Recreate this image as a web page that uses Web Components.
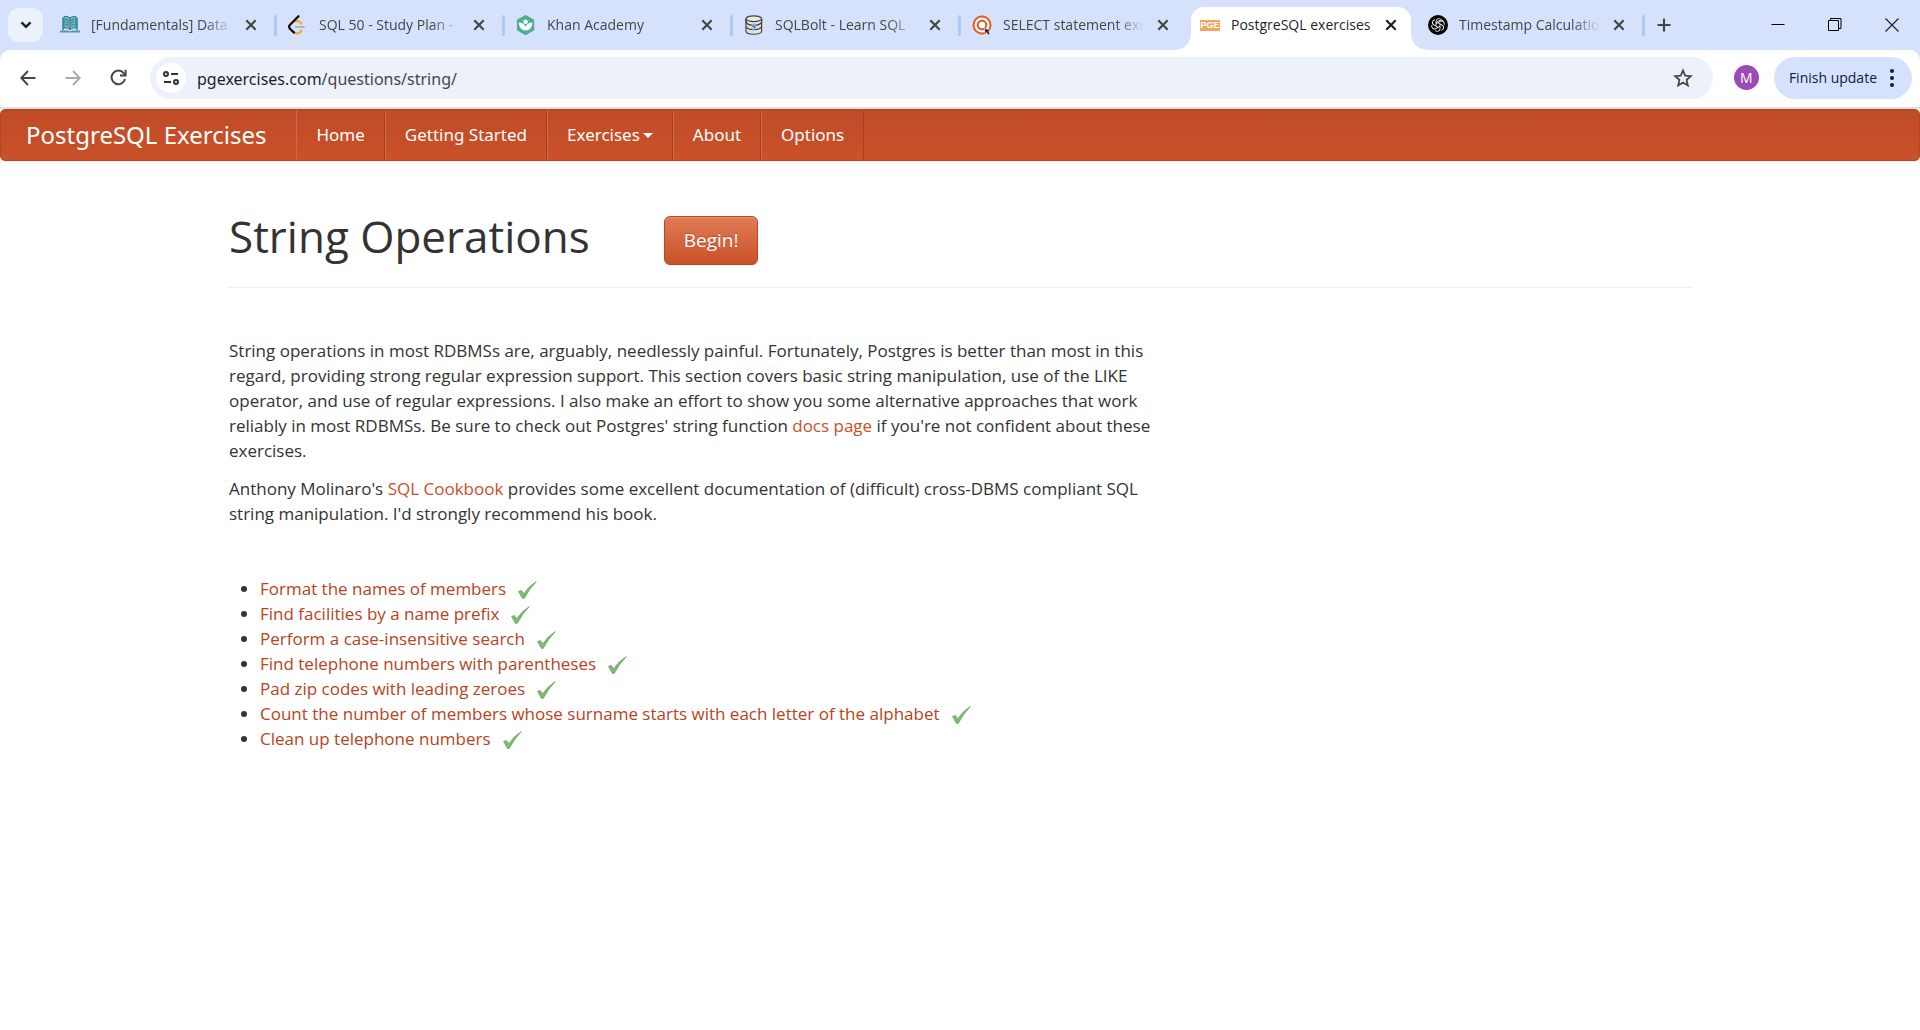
<!DOCTYPE html>
<html lang="en">
<head>
<meta charset="utf-8">
<title>PostgreSQL exercises</title>
<style>
  html, body { margin: 0; background: #fff; }
  body { font-family: "Open Sans", "Noto Sans", sans-serif; color: #333; min-height: 100vh; }
</style>
</head>
<body>
<browser-chrome>
  <tab-strip slot="tabs">
    <browser-tab label="[Fundamentals] Data"><svg slot="icon" viewBox="0 0 20 20"><path fill="#4d98ad" d="M2 3l2-1v13H2zM16 2l2 1v12h-2z"/><path fill="#70b4c4" d="M4 1.5c2.500-.5 4.500 0 6 1.500 1.500-1.500 3.500-2 6-1.500V13c-2.500-.3-4.500.2-6 1.700-1.500-1.500-3.500-2-6-1.700z"/><path fill="none" stroke="#33798e" stroke-width="1" d="M4 1.500c2.500-.5 4.500 0 6 1.500 1.500-1.500 3.500-2 6-1.500V13c-2.500-.3-4.500.2-6 1.700-1.500-1.500-3.500-2-6-1.700zM10 3v12M5.500 4.500q2 0 3.500 1M5.500 7q2 0 3.500 1M5.500 9.500q2 0 3.500 1M14.500 4.500q-2 0-3.500 1M14.500 7q-2 0-3.500 1M14.500 9.500q-2 0-3.500 1"/><path fill="#4d98ad" d="M0 15.500h8l2 1 2-1h8v2H0z"/></svg></browser-tab>
    <browser-tab label="SQL 50 - Study Plan -"><svg slot="icon" viewBox="0 0 20 20"><g fill="none" stroke-linecap="round" stroke-width="2.200"><path stroke="#f4a83c" d="M8 6.500q1.500-1.200 3 0l2.500 2.300M7 17.500q2.500 2 4.500.2l2-2"/><path stroke="#b5b5b5" stroke-width="1.800" d="M7.500 12h8.500"/><path stroke="#0a0a0a" d="M10.500 1.200L2 9.800q-1.800 1.900 0 3.900L6 17.600"/></g></svg></browser-tab>
    <browser-tab label="Khan Academy"><svg slot="icon" viewBox="0 0 20 20"><path fill="#4cb08f" d="M9 .3L.9 4.800v10.400L9 19.900q.6.200 1.200 0l8-4.700V4.800L10.200.3Q9.600 0 9 .3z"/><circle cx="9.600" cy="6.800" r="2.300" fill="#fff"/><path fill="#fff" d="M2.800 7.500c3.800 0 6 2 6.800 4.500.8-2.500 3-4.500 6.800-4.500 0 4.500-2.800 8-6.800 8s-6.800-3.500-6.800-8z"/></svg></browser-tab>
    <browser-tab label="SQLBolt - Learn SQL"><svg slot="icon" viewBox="0 0 20 20"><path fill="#e4e3dc" stroke="#444" stroke-width="1.200" d="M2 3.500v12.800C2 20.200 17.600 20.200 17.600 16.300V3.500"/><ellipse cx="9.800" cy="3.700" rx="7.800" ry="2.900" fill="#e9e8e2" stroke="#444" stroke-width="1.200"/><path fill="none" stroke="#444" stroke-width="1.200" d="M2 7.500q2.500 3 7.800 2.700 5.300.3 7.800-2.700M2 11.800q2.500 3 7.800 2.700 5.300.3 7.800-2.700M2 4v4M17.600 4v4"/><path fill="#2f6fd6" stroke="#dfe9fa" stroke-width=".6" d="M11 7l-4 5.200h2.500L8.500 17l4.300-6h-2.500z"/></svg></browser-tab>
    <browser-tab label="SELECT statement exe"><svg slot="icon" viewBox="0 0 20 20"><circle cx="10" cy="10" r="10" fill="#fff"/><circle cx="10" cy="10" r="8.600" fill="none" stroke="#dc6133" stroke-width="2.200"/><circle cx="10" cy="10" r="4.300" fill="none" stroke="#dc6133" stroke-width="2.200"/><path fill="#222" stroke="#fff" stroke-width=".5" d="M12.500 13.500l6 1.500-2 1.200 1.500 2.800-2 .8-1.500-2.500-1.500 1.200z"/></svg></browser-tab>
    <browser-tab label="PostgreSQL exercises" active><pge-badge slot="icon"></pge-badge></browser-tab>
    <browser-tab label="Timestamp Calculatio"><svg slot="icon" viewBox="0 0 20 20"><circle cx="10" cy="10" r="10"/><g fill="none" stroke="#fff" stroke-width=".9" stroke-linejoin="round"><path d="M8 10.900V6.400q0-2.600 2.500-2.800 1.500 0 2.400 1M8 7.500l3.900-2.200q2.200-1 3.600.9"/><path d="M8 10.900V6.400q0-2.600 2.500-2.800 1.500 0 2.400 1" transform="rotate(60 10 10)"/><path d="M8 10.900V6.400q0-2.600 2.500-2.800 1.500 0 2.400 1" transform="rotate(120 10 10)"/><path d="M8 10.900V6.400q0-2.600 2.500-2.800 1.500 0 2.400 1" transform="rotate(180 10 10)"/><path d="M8 10.900V6.400q0-2.600 2.500-2.800 1.500 0 2.400 1" transform="rotate(240 10 10)"/><path d="M8 10.900V6.400q0-2.600 2.500-2.800 1.500 0 2.400 1" transform="rotate(300 10 10)"/></g></svg></browser-tab>
  </tab-strip>
  <address-bar host-name="pgexercises.com" path="/questions/string/"></address-bar>
</browser-chrome>

<site-nav brand="PostgreSQL Exercises">
  <nav-item>Home</nav-item>
  <nav-item>Getting Started</nav-item>
  <nav-item dropdown>Exercises</nav-item>
  <nav-item>About</nav-item>
  <nav-item>Options</nav-item>
</site-nav>

<exercise-page heading="String Operations">
  <intro-text slot="intro"></intro-text>
  <exercise-list slot="exercises"></exercise-list>
</exercise-page>

<script>
class Base extends HTMLElement {
  connectedCallback() {
    if (this.shadowRoot) return;
    this.attachShadow({ mode: 'open' }).innerHTML = this.view();
  }
}

customElements.define('browser-chrome', class extends Base {
  view() {
    return `<style>
      :host { display: block; background: #d6e1fb; border-bottom: 2px solid #dfe3e5; }
      .bar { background: #fff; border-radius: 10px 10px 0 0; }
    </style>
    <slot name="tabs"></slot><div class="bar"><slot></slot></div>`;
  }
});

customElements.define('tab-strip', class extends Base {
  view() {
    return `<style>
      :host { display: flex; height: 50px; align-items: stretch; }
      button { border: 0; background: none; padding: 0; display: grid; place-items: center; }
      .search { width: 35px; height: 34px; border-radius: 11px; background: #ecf2fc; margin: 8px 6px 8px 8px; flex: none; }
      .tabs { display: flex; flex: 0 1 1596px; min-width: 0; }
      .add { width: 38px; flex: none; }
      .win { margin-left: auto; display: flex; }
      .win button { width: 57px; }
      svg { display: block; }
    </style>
    <button class="search" aria-label="Search tabs"><svg width="12" height="8" fill="none" stroke="#1f1f1f" stroke-width="2.400"><path d="M1.500 1.300L6 5.800l4.500-4.500"/></svg></button>
    <div class="tabs"><slot></slot></div>
    <button class="add" aria-label="New tab"><svg width="14" height="14" stroke="#444746" stroke-width="2.200"><path d="M7 .5v13M.5 7h13"/></svg></button>
    <div class="win">
      <button aria-label="Minimize"><svg width="14" height="14" stroke="#000"><path d="M.5 6.500h13"/></svg></button>
      <button aria-label="Restore"><svg width="14" height="14" fill="none" stroke="#000"><path d="M.5 2.500h10v10H.5zM2.500 2.500v-2h10.500v10h-2.500"/></svg></button>
      <button aria-label="Close"><svg width="14" height="14" stroke="#222" stroke-width="1.200"><path d="M.5.5l13 13M13.500.5l-13 13"/></svg></button>
    </div>`;
  }
});

customElements.define('browser-tab', class extends Base {
  view() {
    return `<style>
      :host { display: flex; align-items: center; flex: 1 1 0; min-width: 0; padding-left: 11px; box-sizing: border-box; color: #444746; position: relative; }
      ::slotted(*) { width: 20px; height: 20px; flex: none; display: block; margin-right: 11px; }
      .label { flex: 1; min-width: 0; overflow: hidden; white-space: nowrap; font: 14px/22px "Open Sans", sans-serif;
        -webkit-mask-image: linear-gradient(to right, #000 calc(100% - 28px), transparent); mask-image: linear-gradient(to right, #000 calc(100% - 28px), transparent); }
      button { border: 0; background: none; color: inherit; padding: 0; width: 12px; height: 20px; display: grid; place-items: center; margin: 0 17px 0 13px; }
      .sep { width: 3px; height: 21px; border-radius: 2px; background: #aec8f8; }
      .shape { display: none; }
      :host([active]) { color: #1f1f1f; z-index: 1; }
      :host([active]) .label { -webkit-mask-image: none; mask-image: none; }
      :host([active]) .shape { display: block; position: absolute; z-index: -1; inset: 7px 6px 0 2px; background: #fff; border-radius: 13px 13px 0 0; }
      .shape::before, .shape::after { content: ""; position: absolute; bottom: 0; width: 15px; height: 15px; }
      .shape::before { right: 100%; background: radial-gradient(circle at 0 0, transparent 14px, #fff 15px); }
      .shape::after { left: 100%; background: radial-gradient(circle at 100% 0, transparent 14px, #fff 15px); }
      :host([active]) .sep, :host([quiet]) .sep { visibility: hidden; }
    </style>
    <div class="shape"></div><slot name="icon"></slot><span class="label">${this.getAttribute('label')}</span>
    <button aria-label="Close tab"><svg width="12" height="12" stroke="currentColor" stroke-width="2.200"><path d="M1.300 1.300l9.400 9.400M10.700 1.300l-9.400 9.400"/></svg></button><div class="sep"></div>`;
  }
  connectedCallback() {
    const next = this.nextElementSibling;
    if (next && next.hasAttribute('active')) this.setAttribute('quiet', '');
    super.connectedCallback();
  }
});

customElements.define('pge-badge', class extends Base {
  view() {
    return `<style>:host { display: flex !important; align-items: center; }
      span { flex: 1; background: #f2a65e; color: #fff; font: bold 9px/11px "Liberation Sans", sans-serif; text-align: center; }</style><span>PGE</span>`;
  }
});

customElements.define('address-bar', class extends Base {
  view() {
    return `<style>
      :host { display: flex; align-items: center; padding: 7px 8px 9px 14px; height: 41px; color: #444746; }
      button { border: 0; background: none; padding: 0; color: inherit; display: grid; place-items: center; flex: none; }
      .tool { width: 28px; height: 28px; margin-right: 17px; }
      form { flex: 1; display: flex; align-items: center; height: 42px; border-radius: 21px; background: #edf1fa; padding: 0 20px 0 6px; box-sizing: border-box; margin-left: 1px; }
      .site { width: 30px; height: 30px; border-radius: 50%; background: #fff; }
      .url { flex: 1; font: 16px/24px "Noto Sans", sans-serif; margin-left: 11px; padding-top: 3px; white-space: nowrap; }
      .url b { font-weight: 400; color: #1f1f1f; }
      .me { width: 25px; height: 25px; border-radius: 50%; background: #9c4bb6; color: #fff; font: 14px/25px "Open Sans", sans-serif; margin: 0 15px 0 21px; }
      .update { display: flex; align-items: center; gap: 13px; height: 42px; border-radius: 21px; background: #d6e1fb; color: #0b1d47; font: 14px/20px "Open Sans", sans-serif; padding: 0 18px 0 15px; }
    </style>
    <button class="tool" aria-label="Back"><svg width="16" height="16" fill="none" stroke="#444746" stroke-width="1.900"><path d="M15.500 8H1.500M8 1L1.300 8 8 15"/></svg></button>
    <button class="tool" aria-label="Forward"><svg width="16" height="16" fill="none" stroke="#aaa" stroke-width="1.900"><path d="M.5 8h14M8 1l6.700 7L8 15"/></svg></button>
    <button class="tool" aria-label="Reload"><svg width="17" height="17" fill="none" stroke="#444746" stroke-width="2"><path d="M15 10a6.800 6.800 0 1 1-1.200-5.700L15.500 6.200"/><path d="M15.600.8v5.700H10"/></svg></button>
    <form>
      <button type="button" class="site" aria-label="Site information"><svg width="16" height="14" fill="none" stroke="#333" stroke-width="2"><circle cx="3" cy="3" r="2"/><path d="M8 3h7M1 11h7"/><circle cx="13" cy="11" r="2"/></svg></button>
      <span class="url"><b>${this.getAttribute('host-name')}</b>${this.getAttribute('path')}</span>
      <button type="button" aria-label="Bookmark"><svg width="20" height="19" fill="none" stroke="#444746" stroke-width="1.800"><path d="M10 2.500l2.200 5.200 5.600.5-4.200 3.700 1.200 5.500L10 14.500l-4.800 2.900 1.200-5.500-4.200-3.700 5.600-.5z"/></svg></button>
    </form>
    <button class="me" aria-label="Profile">M</button>
    <button class="update">Finish update<svg width="4" height="18" fill="#0b1d47"><circle cx="2" cy="2" r="2"/><circle cx="2" cy="9" r="2"/><circle cx="2" cy="16" r="2"/></svg></button>`;
  }
});

customElements.define('site-nav', class extends Base {
  view() {
    return `<style>
      :host { display: block; }
      nav { display: flex; height: 50px; border: 1px solid #b5451f; border-radius: 5px; background: linear-gradient(#be4b27, #cb5129);
        box-shadow: 0 1px 5px rgba(0,0,0,.07); color: #fff; font: 17px/50px "Noto Sans", sans-serif; }
      .brand { color: inherit; text-decoration: none; font-size: 24px; padding: 0 30px 0 25px; }
    </style>
    <nav><a class="brand" href="#">${this.getAttribute('brand')}</a><slot></slot></nav>`;
  }
});

customElements.define('nav-item', class extends Base {
  view() {
    const caret = this.hasAttribute('dropdown') ? '<i></i>' : '';
    return `<style>
      :host { display: block; }
      a { display: flex; align-items: center; gap: 3px; color: inherit; text-decoration: none; padding: 0 19px; border-left: 1px solid #d0694a; border-right: 1px solid #a53f1e; }
      i { border: 5px solid transparent; border-top-color: #fff; border-bottom: 0; }
    </style><a href="#"><slot></slot>${caret}</a>`;
  }
});

customElements.define('exercise-page', class extends Base {
  view() {
    return `<style>
      :host { display: block; max-width: 1462px; margin: 0 auto; }
      header { display: flex; align-items: flex-start; gap: 74px; padding: 55px 0 22px; border-bottom: 1px solid #eee; margin-bottom: 50px; }
      h1 { margin: 0; font: 400 44px/40px "Open Sans", sans-serif; color: #333; white-space: nowrap; }
      button { font: 19px/25px "Open Sans", sans-serif; color: #fff; height: 49px; padding: 0 19px; border: 1px solid #b9481f; border-radius: 6px;
        background: linear-gradient(#df7c56, #ca5027); box-shadow: inset 0 1px 0 rgba(255,255,255,.2), 0 1px 2px rgba(0,0,0,.05); text-shadow: 0 -1px 0 rgba(0,0,0,.25); }
      main { display: block; }
    </style>
    <main><header><h1>${this.getAttribute('heading')}</h1><button>Begin!</button></header>
    <slot name="intro"></slot><slot name="exercises"></slot></main>`;
  }
});

customElements.define('intro-text', class extends Base {
  view() {
    return `<style>
      :host { display: block; max-width: 936px; font: 17px/25px "Open Sans", sans-serif; color: #333; }
      p { margin: 0 0 13px; }
      a { color: #ca5027; text-decoration: none; }
    </style>
    <p>String operations in most RDBMSs are, arguably, needlessly painful. Fortunately, Postgres is better than most in this regard, providing strong regular expression support. This section covers basic string manipulation, use of the LIKE operator, and use of regular expressions. I also make an effort to show you some alternative approaches that work reliably in most RDBMSs. Be sure to check out Postgres' string function <a href="#">docs page</a> if you're not confident about these exercises.</p>
    <p>Anthony Molinaro's <a href="#">SQL Cookbook</a> provides some excellent documentation of (difficult) cross-DBMS compliant SQL string manipulation. I'd strongly recommend his book.</p>`;
  }
});

customElements.define('exercise-list', class extends Base {
  view() {
    const names = ['Format the names of members', 'Find facilities by a name prefix', 'Perform a case-insensitive search',
      'Find telephone numbers with parentheses', 'Pad zip codes with leading zeroes',
      'Count the number of members whose surname starts with each letter of the alphabet', 'Clean up telephone numbers'];
    return `<style>
      :host { display: block; padding-top: 37px; font: 17px/25px "Open Sans", sans-serif; color: #333; }
      ul { margin: 0; padding: 0 0 0 31px; }
      li { height: 25px; }
      a { color: #b8431c; text-decoration: none; }
      svg { width: 19px; height: 18px; margin-left: 12px; vertical-align: -4px; }
    </style>
    <ul>${names.map(n => `<li><a href="#">${n}</a><svg viewBox="0 0 19 18" aria-label="Solved"><path fill="#82bb74" stroke="#5e9d58" stroke-width=".7" stroke-linejoin="round" d="M.6 10.400l2.700-.9 2.600 3.200Q10.500 5.500 18.300.6 11 8 6.200 17.400L4.300 17.300z"/></svg></li>`).join('')}</ul>`;
  }
});
</script>
</body>
</html>
